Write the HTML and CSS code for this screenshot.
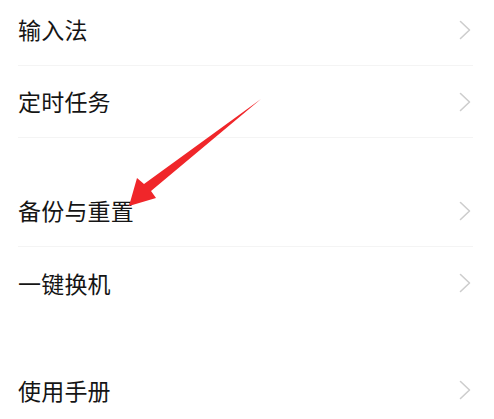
FILE: index.html
```html
<!DOCTYPE html>
<html lang="zh-CN">
<head>
<meta charset="utf-8">
<link rel="stylesheet" href="styles.css">
</head>
<body>
<div class="page">
  <div class="list">
    <div class="row divided"><span class="label">输入法</span><svg class="chev" viewBox="0 0 12 20" width="12" height="20"><polyline points="1.5,1.5 10.5,10 1.5,18.5"/></svg></div>
    <div class="row divided"><span class="label">定时任务</span><svg class="chev" viewBox="0 0 12 20" width="12" height="20"><polyline points="1.5,1.5 10.5,10 1.5,18.5"/></svg></div>
  </div>
  <div class="list group">
    <div class="row divided"><span class="label">备份与重置</span><svg class="chev" viewBox="0 0 12 20" width="12" height="20"><polyline points="1.5,1.5 10.5,10 1.5,18.5"/></svg></div>
    <div class="row"><span class="label">一键换机</span><svg class="chev" viewBox="0 0 12 20" width="12" height="20"><polyline points="1.5,1.5 10.5,10 1.5,18.5"/></svg></div>
  </div>
  <div class="list group">
    <div class="row"><span class="label">使用手册</span><svg class="chev" viewBox="0 0 12 20" width="12" height="20"><polyline points="1.5,1.5 10.5,10 1.5,18.5"/></svg></div>
  </div>
  <svg class="arrow" viewBox="0 0 494 419" width="494" height="419">
    <polygon points="261,99 151,191 156,198 129,206 137,178 144,184"/>
  </svg>
</div>
</body>
</html>
```
FILE: styles.css
```css
html, body {
  margin: 0;
  padding: 0;
  background: #ffffff;
}
.page {
  position: relative;
  width: 494px;
  height: 419px;
  overflow: hidden;
  font-family: "Noto Sans CJK SC", "Noto Sans", sans-serif;
}
.list {
  display: flex;
  flex-direction: column;
  margin-top: -6px;
}
.list.group {
  margin-top: 37px;
}
.list.group + .list.group {
  margin-top: 35px;
}
.row {
  height: 72px;
  margin-left: 18px;
  margin-right: 21px;
  display: flex;
  align-items: center;
  justify-content: space-between;
  box-sizing: border-box;
}
.row.divided {
  border-bottom: 1px solid #f4f4f4;
}
.label {
  font-size: 23px;
  color: #151515;
  letter-spacing: 0.2px;
  line-height: 1;
}
.chev {
  margin-right: 2px;
}
.chev polyline {
  fill: none;
  stroke: #cdcdcd;
  stroke-width: 1.6;
  stroke-linecap: round;
  stroke-linejoin: round;
}
.arrow {
  position: absolute;
  left: 0;
  top: 0;
  pointer-events: none;
}
.arrow polygon {
  fill: #f0262a;
}
```
